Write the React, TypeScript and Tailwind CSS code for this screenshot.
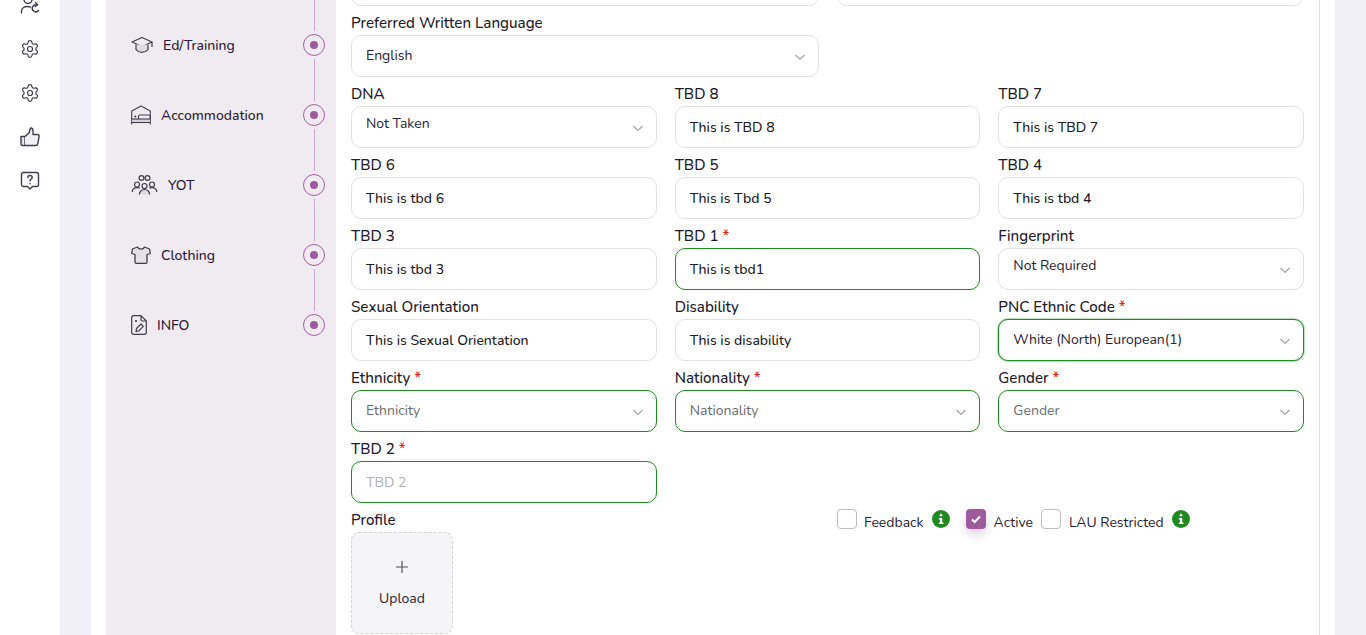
import React from 'react';
import { Settings } from 'lucide-react';

const ChevronDown = () => (
  <svg className="w-3 h-3 shrink-0 mt-[2px] text-[#a3a3ab]" viewBox="0 0 12 12" fill="none" stroke="currentColor" strokeWidth="1.2">
    <path d="M1.5 4l4.5 4.5L10.500 4" />
  </svg>
);

const GearIcon = () => <Settings size={20} strokeWidth={1.4} color="#3f3d4d" />;

const UserRefreshIcon = () => (
  <svg className="w-5 h-5" viewBox="0 0 20 20" fill="none" stroke="#3f3d4d" strokeWidth="1.4" strokeLinecap="round">
    <circle cx="8" cy="4.500" r="4" />
    <path d="M1.500 18v-2c0-2.500 2.500-4.500 6-4.500 1.200 0 2.300.2 3.200.6" />
    <path d="M18.500 15.500a3.500 3.500 0 1 1-1.500-5.500" />
    <path d="M15.500 7.500l2 2.300-2.300 1.700" />
  </svg>
);

const ThumbIcon = () => (
  <svg className="w-5 h-5" viewBox="0 0 20 20" fill="none" stroke="#3f3d4d" strokeWidth="1.4" strokeLinejoin="round">
    <path d="M1 9.500h4v9H2.500A1.500 1.500 0 0 1 1 17z" fill="#e6e6ea" />
    <path d="M5 9.500l4-3.500 1.500-5c1.500 0 2.500 1 2.500 2.500V7.500h4.500c1 0 1.800.8 1.600 1.800l-1.300 7.500c-.2 1-1 1.700-2 1.700H5" fill="#f1f1f4" />
  </svg>
);

const HelpBubbleIcon = () => (
  <svg className="w-5 h-5" viewBox="0 0 20 20" fill="none" stroke="#3f3d4d" strokeWidth="1.4" strokeLinejoin="round">
    <path d="M3.500 1.500h13a2 2 0 0 1 2 2v10a2 2 0 0 1-2 2H12.500L10 18l-2.500-2.500h-4a2 2 0 0 1-2-2v-10a2 2 0 0 1 2-2z" />
    <path d="M7.800 6.500c0-1.300 1-2 2.200-2s2.200.8 2.200 2c0 1.700-2.200 1.700-2.200 3.500" strokeLinecap="round" />
    <path d="M10 12.400v.4" strokeLinecap="round" />
  </svg>
);

const CapIcon = () => (
  <svg className="w-[22px] h-[18px]" viewBox="0 0 22 18" fill="none" stroke="#3f3d4d" strokeWidth="1.2" strokeLinejoin="round">
    <path d="M11 1.500L1 6l10 4.500L21 6z" />
    <path d="M5 8.500v5c1.500 2 3.500 2.800 6 2.800s4.500-.8 6-2.800v-5" fill="#dfdbe0" />
    <path d="M21 6v5" />
  </svg>
);

const BedIcon = () => (
  <svg className="w-[20px] h-[20px]" viewBox="0 0 20 20" fill="none" stroke="#3f3d4d" strokeWidth="1.100" strokeLinejoin="round">
    <path d="M.700 19.500V6L10 1l9.300 5v13.500" />
    <rect x="1.200" y="14" width="17.600" height="3.500" fill="#dad6dc" stroke="none" />
    <path d="M.700 17.500h18.600" />
    <path d="M7.500 14v-2.500a1.500 1.500 0 0 1 1.500-1.500h8.500a1.800 1.800 0 0 1 1.800 1.800V14" />
    <path d="M.700 14h18.600" />
    <circle cx="4.300" cy="11.500" r="1.100" fill="#3f3d4d" stroke="none" />
  </svg>
);

const GroupIcon = () => (
  <svg className="w-[27px] h-[20px]" viewBox="0 0 26 20" fill="none" stroke="#3f3d4d" strokeWidth="1.200">
    <circle cx="10" cy="3" r="2.400" />
    <circle cx="16" cy="3" r="2.400" />
    <circle cx="5.500" cy="9.500" r="2.500" />
    <circle cx="13" cy="11" r="2.500" />
    <circle cx="20.500" cy="9.500" r="2.500" />
    <path d="M.700 17c0-2.600 2.200-4.400 5-4.400 1 0 1.800.2 2.500.6M25.300 17c0-2.600-2.200-4.400-5-4.400-1 0-1.800.2-2.500.6" />
    <path d="M7.800 19.500c0-2.800 2.300-5 5.200-5s5.200 2.200 5.200 5" fill="#dfdbe0" />
  </svg>
);

const ShirtIcon = () => (
  <svg className="w-[20px] h-[18px]" viewBox="0 0 20 18" fill="#e4e0e5" stroke="#3f3d4d" strokeWidth="1.300" strokeLinejoin="round">
    <path d="M6.500 1L1.500 3 .700 7.500 4 8.500V16a1.300 1.300 0 0 0 1.300 1.300h9.400A1.300 1.300 0 0 0 16 16V8.500l3.300-1L18.500 3l-5-2c-.7 1.500-2 2.200-3.500 2.200S7.200 2.500 6.500 1z" />
  </svg>
);

const FileEditIcon = () => (
  <svg className="w-[16px] h-[20px]" viewBox="0 0 16 20" fill="none" stroke="#3f3d4d" strokeWidth="1.200" strokeLinejoin="round">
    <path d="M2.500.700h7.500l5.300 5.300v11.500a1.800 1.800 0 0 1-1.800 1.800H2.500a1.800 1.800 0 0 1-1.800-1.800V2.500A1.800 1.800 0 0 1 2.500.700z" />
    <path d="M10 .700V4.500a1.500 1.500 0 0 0 1.500 1.500h3.800" />
    <path d="M5 16.500l.5-3 4.500-4.500 2.300 2.300-4.500 4.500z" />
    <circle cx="5" cy="6" r=".5" fill="#3f3d4d" />
  </svg>
);

const InfoBadge = () => (
  <svg className="w-[18px] h-[18px] block" viewBox="0 0 18 18">
    <circle cx="9" cy="9" r="9" fill="#1f8a1f" />
    <circle cx="9" cy="5.200" r="1.400" fill="#fff" />
    <path d="M6.800 8h3.400v4.500h1.200v1.500H6.800v-1.500H8V9.500H6.800z" fill="#fff" />
  </svg>
);

const steps = [
  { label: 'Ed/Training', icon: <CapIcon /> },
  { label: 'Accommodation', icon: <BedIcon /> },
  { label: 'YOT', icon: <GroupIcon /> },
  { label: 'Clothing', icon: <ShirtIcon /> },
  { label: 'INFO', icon: <FileEditIcon /> },
];

const Stepper = () => (
  <div className="w-[230px] shrink-0 bg-[#f0ebf0] h-full pl-[25px] pr-[11px]">
    <div className="h-[10px] flex justify-end">
      <div className="w-[22px] flex justify-center">
        <div className="w-px bg-[#cfa6cd]" />
      </div>
    </div>
    {steps.map((s, i) => (
      <div key={s.label} className="h-[70px] flex items-center justify-between">
        <div className="flex items-center gap-[10px] text-[14px] font-medium text-[#2e1a3a]">
          <div className="flex items-center justify-center">{s.icon}</div>
          <span>{s.label}</span>
        </div>
        <div className="flex flex-col items-center h-full w-[22px]">
          <div className="w-px grow bg-[#cfa6cd]" />
          <div className="w-[22px] h-[22px] shrink-0 my-[3px] rounded-full border border-[#a85fa2] flex items-center justify-center">
            <div className="w-2 h-2 rounded-full bg-[#9c5c9c]" />
          </div>
          <div className={`w-px grow ${i === steps.length - 1 ? '' : 'bg-[#cfa6cd]'}`} />
        </div>
      </div>
    ))}
  </div>
);

type FieldProps = {
  label: string;
  value?: string;
  required?: boolean;
  select?: boolean;
  active?: boolean;
  placeholder?: boolean;
  raised?: boolean;
  shadow?: boolean;
};

const Field: React.FC<FieldProps> = ({ label, value, required, select, active, placeholder, raised, shadow }) => (
  <div>
    <div className="h-[29px] pt-[6px] text-[15.15px] font-medium leading-[22px] text-[#231a2a]">
      {label}
      {required && <span className="text-[#e5281f]"> *</span>}
    </div>
    <div
      className={`h-[42px] rounded-[10px] border bg-white pl-[14px] pr-[12px] flex items-center justify-between ${
        active ? 'border-[#1f8a1f]' : 'border-[#e2e2e4]'
      } ${shadow ? 'shadow-[0_0_2px_#1f8a1f]' : ''}`}
    >
      <span
        className={`text-[14px] ${raised ? 'mb-[7px]' : select ? 'mb-[2px]' : ''} ${
          placeholder ? (select ? 'text-[#6b6b6e]' : 'text-[#b0b0b2]') : select ? 'text-[#2a2233]' : 'text-[#1d1a24] font-medium'
        }`}
      >
        {value}
      </span>
      {select && <ChevronDown />}
    </div>
  </div>
);

const Checkbox: React.FC<{ checked?: boolean }> = ({ checked }) =>
  checked ? (
    <div className="w-5 h-5 rounded-[4px] bg-[#9c5c9c] flex items-center justify-center shadow-[0_5px_10px_rgba(60,40,70,0.2)]">
      <svg className="w-3 h-3" viewBox="0 0 12 12" fill="none" stroke="#fff" strokeWidth="2">
        <path d="M2 6.500l2.700 2.500L10 3.500" />
      </svg>
    </div>
  ) : (
    <div className="w-5 h-5 rounded-[4px] border border-[#bdbdc2] bg-white" />
  );

const App: React.FC = () => {
  return (
    <div className="h-[635px] w-[1366px] overflow-hidden flex bg-[#f1f0f7] font-['Nunito','Open_Sans',sans-serif]">
      {/* icon rail */}
      <aside className="w-[60px] shrink-0 bg-white flex flex-col items-center gap-6 -mt-[5px]">
        <UserRefreshIcon />
        <GearIcon />
        <GearIcon />
        <ThumbIcon />
        <HelpBubbleIcon />
      </aside>

      <main className="ml-[31px] w-[1244px] bg-white flex pl-[15px]">
        <Stepper />

        <div className="pl-[15px] w-[984px] border-r border-[#e2e2e4] pr-[15px] shrink-0">
          <div className="w-[953px]">
            <div className="grid grid-cols-2 gap-x-[18px] -mt-[36px]">
              <div className="h-[42px] rounded-[10px] border border-[#e2e2e4]" />
              <div className="h-[42px] rounded-[10px] border border-[#e2e2e4]" />
            </div>
            <div className="grid grid-cols-2 gap-x-[18px]">
              <Field label="Preferred Written Language" value="English" select />
            </div>
            <div className="grid grid-cols-3 gap-x-[18px]">
              <Field label="DNA" value="Not Taken" select raised />
              <Field label="TBD 8" value="This is TBD 8" />
              <Field label="TBD 7" value="This is TBD 7" />
              <Field label="TBD 6" value="This is tbd 6" />
              <Field label="TBD 5" value="This is Tbd 5" />
              <Field label="TBD 4" value="This is tbd 4" />
              <Field label="TBD 3" value="This is tbd 3" />
              <Field label="TBD 1" value="This is tbd1" required active />
              <Field label="Fingerprint" value="Not Required" select raised />
              <Field label="Sexual Orientation" value="This is Sexual Orientation" />
              <Field label="Disability" value="This is disability" />
              <Field label="PNC Ethnic Code" value="White (North) European(1)" required select active shadow />
              <Field label="Ethnicity" value="Ethnicity" required select active placeholder />
              <Field label="Nationality" value="Nationality" required select active placeholder />
              <Field label="Gender" value="Gender" required select active placeholder />
              <Field label="TBD 2" value="TBD 2" required active placeholder />
            </div>

            <div className="flex mt-[6px]">
              <div className="w-[486px] shrink-0">
                <div className="h-[22px] text-[15.15px] font-medium leading-[22px] text-[#231a2a]">Profile</div>
                <div className="w-[102px] h-[102px] mt-px pt-[3px] rounded-[8px] border border-dashed border-[#d6d6d9] bg-[#f5f4f7] flex flex-col items-center justify-center gap-[15px] text-[14px] text-[#2a2233]">
                  <svg className="w-3 h-3" viewBox="0 0 12 12" stroke="#55535c" strokeWidth="1.200">
                    <path d="M6 0v12M0 6h12" />
                  </svg>
                  <span>Upload</span>
                </div>
              </div>
              <div className="flex items-start h-[22px] text-[14px] text-[#2a2233]">
                <div className="flex items-start">
                  <Checkbox />
                  <span className="ml-[7px] mt-[3px]">Feedback</span>
                  <span className="ml-2 mt-px"><InfoBadge /></span>
                </div>
                <div className="flex items-start ml-4">
                  <Checkbox checked />
                  <span className="ml-2 mt-[3px]">Active</span>
                </div>
                <div className="flex items-start ml-2">
                  <Checkbox />
                  <span className="ml-2 mt-[3px]">LAU Restricted</span>
                  <span className="ml-2 mt-px"><InfoBadge /></span>
                </div>
              </div>
            </div>
          </div>
        </div>
      </main>
    </div>
  );
};

export default App;
